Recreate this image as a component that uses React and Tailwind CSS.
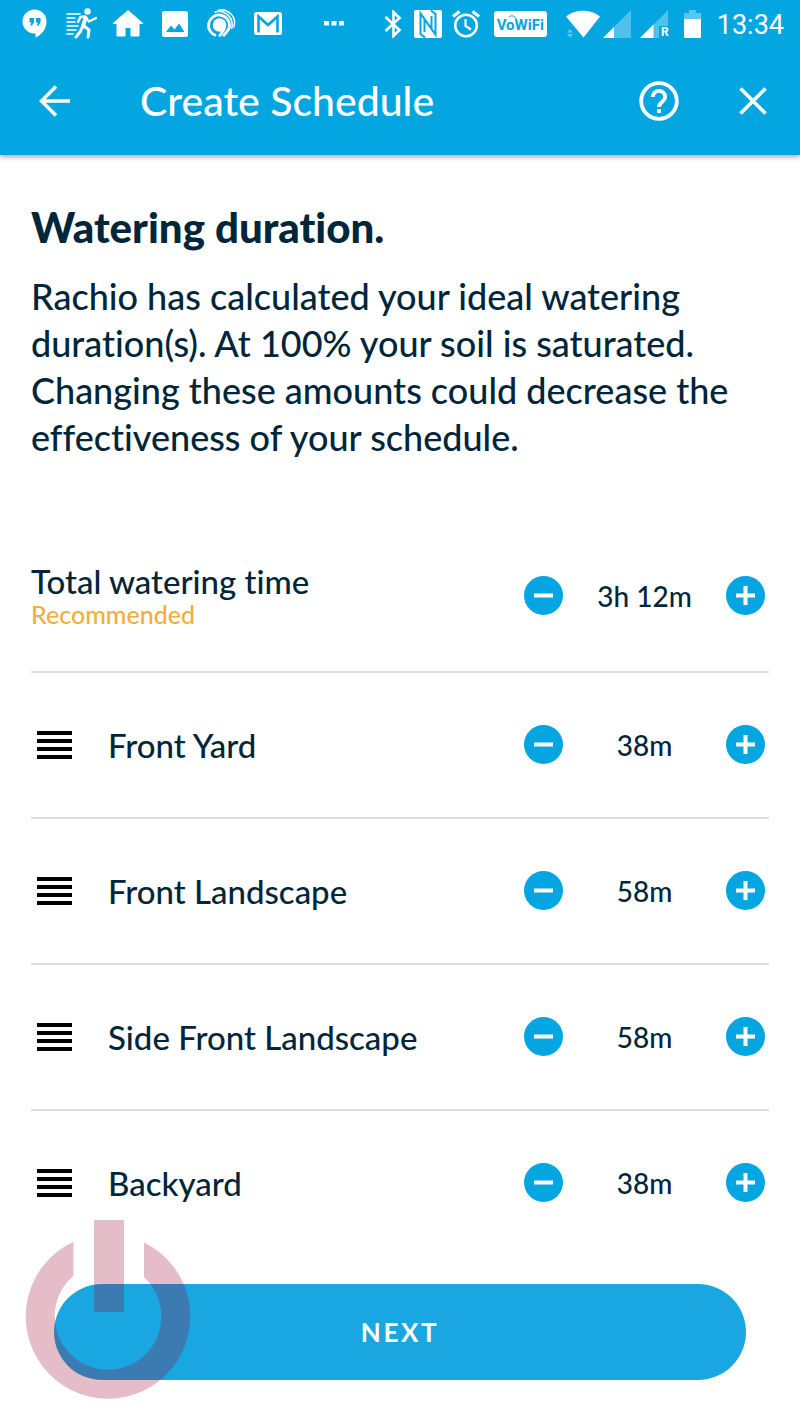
import React, { useState } from 'react';

const initialZones = [
  { id: 1, name: 'Front Yard', minutes: 38 },
  { id: 2, name: 'Front Landscape', minutes: 58 },
  { id: 3, name: 'Side Front Landscape', minutes: 58 },
  { id: 4, name: 'Backyard', minutes: 38 },
];

const formatDuration = (total) => {
  const hours = Math.floor(total / 60);
  const minutes = total % 60;
  return hours > 0 ? `${hours}h ${minutes}m` : `${minutes}m`;
};

const StatusBar = () => (
  <div className="flex h-12 items-center pl-[18px] pr-4">
    <div className="flex items-center gap-[15px]">
      {/* Chat */}
      <svg className="h-8 w-8" viewBox="0 0 32 32" fill="#fff">
        <path d="M16.500 1.500a12 12 0 0 0 0 24h1v4c6-2.500 11-8.500 11-16a12 12 0 0 0-12-12z" />
        <path fill="#04a6e1" d="M11.500 10h4.500v4.500l-2 3h-2l1.500-3h-2zM18 10h4.500v4.500l-2 3h-2l1.500-3h-2z" />
      </svg>
      {/* Running man */}
      <svg className="h-8 w-8" viewBox="0 0 32 32" fill="none" stroke="#fff" strokeLinecap="round" strokeLinejoin="round">
        <circle cx="22.500" cy="3.500" r="3.200" fill="#fff" stroke="none" />
        <path strokeWidth="1.600" d="M2 6h13M2 10h8M2 14h8M2 18h11M2 22h9M2 26h6" />
        <path strokeWidth="2.500" d="M13 14l2.500-5 4.500-.5 4 5 7-3.500" />
        <path strokeWidth="4" d="M20.500 10l-2.500 8" />
        <path strokeWidth="3" d="M18 18l-3 6-4 5M19 18l5 4-1 7" />
      </svg>
      {/* Home */}
      <svg className="h-8 w-8" viewBox="0 0 32 32" fill="#fff">
        <path strokeLinejoin="round" stroke="#fff" d="M16 2.500L31 15.500h-4V28h-8v-8.500h-6V28H5V15.500H1z" />
      </svg>
      {/* Picture */}
      <svg className="h-8 w-8" viewBox="0 0 32 32">
        <rect x="3" y="3" width="26" height="26" rx="2.500" fill="#fff" />
        <path fill="#04a6e1" d="M7 24l5-6.500 3.500 4L20 15.500 25.500 24z" />
      </svg>
      {/* Rings */}
      <svg className="h-8 w-8" viewBox="0 0 32 32" fill="none" stroke="#fff">
        <path strokeWidth="2.800" d="M10 27.500A10.500 10.500 0 1 1 23.500 17.500C23.500 22 20 25 17 28" />
        <circle cx="13.500" cy="17" r="6.800" fill="#fff" stroke="none" />
        <path strokeWidth="2.800" d="M18.500 20c-1 3-3.500 5-5 8.500" />
        <path strokeWidth="1.500" d="M8.500 4.500C16 .500 29 8 25.500 21M12 2.500C20-.5 32 8 27.500 19.500" />
      </svg>
      {/* Mail */}
      <svg className="h-8 w-8" viewBox="0 0 32 32">
        <rect x="1" y="4" width="28" height="23" rx="2.500" fill="#fff" />
        <path fill="none" stroke="#04a6e1" strokeWidth="2.600" d="M5.500 24.500V8.500L15 17l9.500-8.500v16" />
      </svg>
    </div>
    <svg className="ml-[39px] h-5 w-5" viewBox="0 0 20 20" fill="#fff">
      <path d="M0 7h5v4.500H0zM7.500 7h5v4.500h-5zM15 7h5v4.500h-5z" />
    </svg>

    <div className="ml-auto flex items-center">
      {/* Bluetooth */}
      <svg className="h-7 w-[18px]" viewBox="0 0 18 28" fill="none" stroke="#fff" strokeWidth="2.600">
        <path d="M1.500 7l14 13L9.500 26V2l6 6-14 13" />
      </svg>
      {/* NFC */}
      <svg className="ml-3 h-7 w-7" viewBox="0 0 28 28">
        <rect width="28" height="28" rx="2" fill="#fff" />
        <path fill="none" stroke="#04a6e1" strokeWidth="2" d="M11 27.500L6.500 24V3.500L17.500 19V6M17 .500L21.500 4v20.500L10.500 9V22" />
      </svg>
      {/* Alarm */}
      <svg className="ml-[10px] h-7 w-7" viewBox="0 0 28 28" fill="none" stroke="#fff">
        <circle cx="14" cy="15.500" r="10.800" strokeWidth="2.600" />
        <path strokeWidth="3" d="M1 6.500l6.500-5M27 6.500l-6.500-5" />
        <path strokeWidth="2.200" d="M13.500 9v7l5.500 3.500" />
      </svg>
      <span className="relative ml-[14px] flex h-[26px] w-[53px] items-center justify-center rounded-[3px] bg-white pt-0.5 font-[Roboto,sans-serif] text-[15px] font-bold text-[#04a6e1]">
        VoWiFi
        {/* Waves above the o */}
        <svg className="absolute left-[14px] top-[4px] h-[6px] w-[9px]" viewBox="0 0 9 6" fill="none" stroke="#04a6e1">
          <path d="M1 2C3 0 7 .500 8 4" />
        </svg>
      </span>
      {/* Wi-Fi */}
      <svg className="ml-[19px] h-7 w-[34px]" viewBox="0 0 34 28" fill="#fff">
        <path d="M0 6.500C9-1.200 25-1.200 34 6.500L17.500 27.500z" />
        <path opacity=".4" d="M1 22.500l3-3.500 3 3.500zM1 24h6l-3 3.500z" />
      </svg>
      {/* Mobile signals */}
      <svg className="ml-[3px] h-7 w-7" viewBox="0 0 28 28" fill="#fff">
        <path opacity=".3" d="M28 0v28H0z" />
        <path d="M11 17v11H0z" />
      </svg>
      <span className="relative ml-[9px]">
        <svg className="h-7 w-7" viewBox="0 0 28 28" fill="#fff">
          <path opacity=".3" d="M28 0v16h-9v12H0z" />
          <path d="M13.500 14.500V28H0z" />
        </svg>
        <span className="absolute -right-px bottom-0 font-[Roboto,sans-serif] text-[12px] font-bold leading-3">R</span>
      </span>
      {/* Battery */}
      <svg className="ml-4 h-7 w-[17px]" viewBox="0 0 17 28" fill="#fff">
        <path opacity=".35" d="M5 0h7v3h5v6H0V3h5z" />
        <path d="M0 9h17v17.500a1.500 1.500 0 0 1-1.500 1.500h-14A1.500 1.500 0 0 1 0 26.500z" />
      </svg>
      <time className="ml-4 pt-0.5 font-[Roboto,sans-serif] text-[27px] font-normal leading-8">13:34</time>
    </div>
  </div>
);

const Stepper = ({ label, value, onDecrease, onIncrease }) => (
  <div className="flex items-center">
    <button
      type="button"
      aria-label={`Decrease ${label}`}
      onClick={onDecrease}
      className="flex h-[39px] w-[39px] items-center justify-center rounded-full bg-[#04a6e1]"
    >
      <svg className="h-[19px] w-[19px]" viewBox="0 0 19 19" stroke="#fff" strokeWidth="4">
        <path d="M0 9.500h19" />
      </svg>
    </button>
    <span className="w-[163px] text-center text-[28px] leading-8">{value}</span>
    <button
      type="button"
      aria-label={`Increase ${label}`}
      onClick={onIncrease}
      className="flex h-[39px] w-[39px] items-center justify-center rounded-full bg-[#04a6e1]"
    >
      <svg className="h-[19px] w-[19px]" viewBox="0 0 19 19" stroke="#fff" strokeWidth="4">
        <path d="M0 9.500h19M9.500 0v19" />
      </svg>
    </button>
  </div>
);

const App = () => {
  const [zones, setZones] = useState(initialZones);

  const total = zones.reduce((sum, zone) => sum + zone.minutes, 0);

  const changeZone = (id, amount) =>
    setZones(zones.map((zone) =>
      zone.id === id ? { ...zone, minutes: Math.max(0, zone.minutes + amount) } : zone
    ));

  const changeAll = (amount) =>
    setZones(zones.map((zone) => ({ ...zone, minutes: Math.max(0, zone.minutes + amount) })));

  return (
    <div className="min-h-screen bg-white font-[Lato,sans-serif] font-medium text-[#01263a] [font-variant-ligatures:none]">
      <header className="bg-[#04a6e1] text-white shadow-[0_2px_5px_rgba(0,0,0,0.35)]">
        <StatusBar />
        <div className="flex h-[107px] items-center pb-px pl-[39px] pr-[33px]">
          <button type="button" aria-label="Back">
            <svg className="h-8 w-8" viewBox="0 0 32 32" fill="none" stroke="#fff" strokeWidth="3.500">
              <path d="M31 16H3M17 1.500L2.500 16 17 30.500" />
            </svg>
          </button>
          <h1 className="ml-[69px] flex-1 text-[41px] leading-[48px]">Create Schedule</h1>
          <button type="button" aria-label="Help">
            <svg className="h-10 w-10" viewBox="0 0 40 40" fill="none" stroke="#fff" strokeWidth="3.800">
              <circle cx="20" cy="20" r="17.800" />
              <path d="M13.800 16a6.200 6.200 0 1 1 12.400 0c0 4.500-6.200 5-6.200 10" />
              <path d="M18 30h4" />
            </svg>
          </button>
          <button type="button" aria-label="Close" className="ml-[60px]">
            <svg className="h-7 w-7" viewBox="0 0 28 28" stroke="#fff" strokeWidth="3.600">
              <path d="M1.500 1.500l25 25M26.500 1.500l-25 25" />
            </svg>
          </button>
        </div>
      </header>

      <main className="px-[31px] pt-12">
        <h2 className="text-[42px] font-black leading-[48px]">Watering duration.</h2>
        <p className="mt-[22px] text-[36px] leading-[47px]">
          Rachio has calculated your ideal watering duration(s). At 100% your soil is saturated.
          Changing these amounts could decrease the effectiveness of your schedule.
        </p>

        {/* Total */}
        <div className="mt-[59px] flex h-[153px] items-center justify-between border-b-2 border-[#dedede] pr-1">
          <div>
            <p className="text-[33px] leading-9">Total watering time</p>
            <p className="text-[25px] leading-[30px] text-[#efae3d]">Recommended</p>
          </div>
          <Stepper
            label="total watering time"
            value={formatDuration(total)}
            onDecrease={() => changeAll(-1)}
            onIncrease={() => changeAll(1)}
          />
        </div>

        {/* Zones */}
        <ul>
          {zones.map((zone) => (
            <li
              key={zone.id}
              className="flex h-[146px] items-center border-b-2 border-[#dedede] pb-px pl-[6px] pr-1 last:border-transparent"
            >
              <svg className="h-7 w-[35px]" viewBox="0 0 35 28" stroke="#000" strokeWidth="4">
                <path d="M0 2h35M0 10h35M0 18h35M0 26h35" />
              </svg>
              <span className="ml-9 flex-1 text-[33px] leading-10">{zone.name}</span>
              <Stepper
                label={zone.name}
                value={formatDuration(zone.minutes)}
                onDecrease={() => changeZone(zone.id, -1)}
                onIncrease={() => changeZone(zone.id, 1)}
              />
            </li>
          ))}
        </ul>
      </main>

      <footer className="relative px-[54px] pb-[42px] pt-[27px]">
        <button
          type="button"
          className="h-24 w-full rounded-full bg-[#1aa6e0] text-[26px] font-bold tracking-widest text-white"
        >
          NEXT
        </button>
        {/* Power mark over the button */}
        <svg
          className="pointer-events-none absolute bottom-[23px] left-[25px] h-[180px] w-[166px]"
          viewBox="0 0 166 180"
          fill="#9f052f"
          opacity=".26"
        >
          <path d="M48.500 22.700A82.300 82.300 0 1 0 119 23.400V58.100A53.300 53.300 0 1 1 48.500 56.800z" />
          <path d="M69 1h30v92H69z" />
        </svg>
      </footer>
    </div>
  );
};

export default App;
